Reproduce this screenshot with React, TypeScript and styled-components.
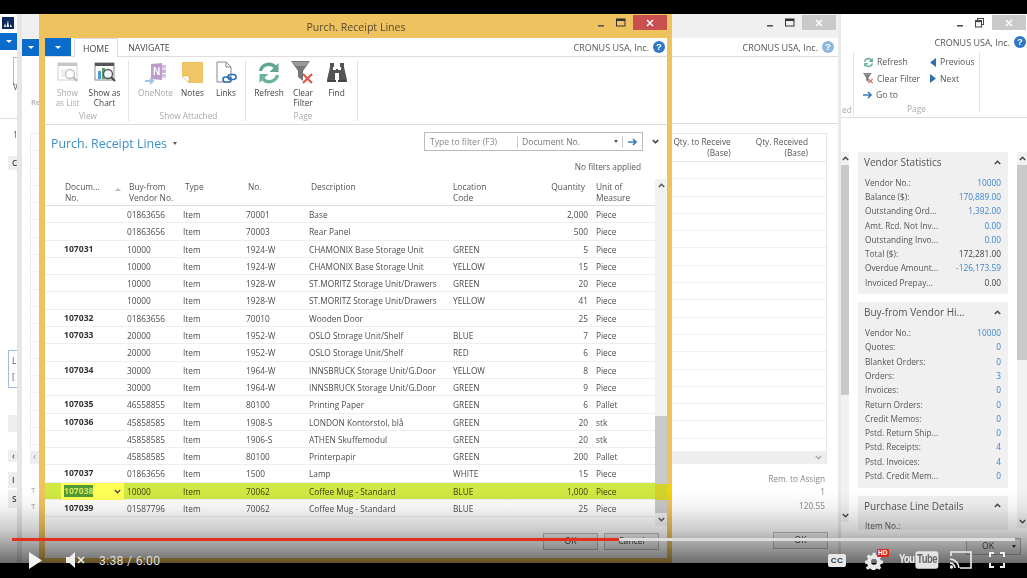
import React from "react";
import styled, { createGlobalStyle } from "styled-components";

const Global = createGlobalStyle`
  html, body { margin: 0; padding: 0; background: #000; }
  * { box-sizing: border-box; }
`;

const FONT = `"Open Sans", "Noto Sans", sans-serif`;

const Stage = styled.div`
  position: relative; width: 1027px; height: 578px; overflow: hidden; background: #000;
  font-family: ${FONT}; font-size: 8.3px; color: #444;
`;
const Desktop = styled.div`
  position: absolute; left: 0; top: 14px; width: 1027px; height: 549px; overflow: hidden; background: #fff;
  filter: blur(0.35px);
`;

/* ---------- window shells ---------- */
const FarWindow = styled.section`
  position: absolute; inset: 0; background: #fff; display: flex; justify-content: space-between;
`;
const MidWindow = styled.section`
  position: absolute; left: 17px; top: 0; width: 824px; height: 549px; background: #fff;
  border-left: 5px solid #e6e6e6; border-right: 3px solid #e9e9e9; display: flex; justify-content: space-between;
`;
const FrontWindow = styled.section`
  position: absolute; left: 39px; top: 0; width: 633px; height: 549px; background: #fff;
  border: solid #eec35f; border-width: 0 5px 5px 6px; display: flex; flex-direction: column;
`;

/* ---------- window controls ---------- */
const Controls = styled.div<{ $h: number; $pad: number }>`
  display: flex; justify-content: flex-end; align-items: flex-start; height: ${p => p.$h}px;
  padding-right: ${p => p.$pad}px;
`;
const Ctl = styled.span`
  width: 20px; height: 15px; margin-top: 1px; display: flex; align-items: center; justify-content: center;
`;
const CloseBtn = styled.span<{ $on?: boolean }>`
  width: 34px; height: 15px; margin-top: 1px; margin-left: 2px; display: flex; align-items: center; justify-content: center;
  background: ${p => (p.$on ? "#c9504f" : "#c9c9c9")}; color: #fff;
`;
const WinControls = ({ h, pad, on, restore, dark }: { h: number; pad: number; on?: boolean; restore?: boolean; dark?: string }) => (
  <Controls $h={h} $pad={pad}>
    <Ctl><svg width="9" height="9"><rect x="1" y="7" width="6" height="1.6" fill={dark || "#555"} /></svg></Ctl>
    <Ctl>
      {restore ? (
        <svg width="10" height="10"><rect x="2.5" y="0.5" width="6" height="6" fill="none" stroke="#444" /><rect x="0.5" y="2.5" width="6" height="6.5" fill="#f4f4f4" stroke="#444" /><rect x="0.5" y="2.5" width="6" height="1.6" fill="#444" /></svg>
      ) : (
        <svg width="10" height="9"><rect x="0.5" y="1" width="8.5" height="7" fill="none" stroke="#333" /><rect x="0.5" y="1" width="8.5" height="2" fill="#333" /></svg>
      )}
    </Ctl>
    <CloseBtn $on={on}><svg width="8" height="8"><path d="M1 1L7 7M7 1L1 7" stroke="#fff" strokeWidth="1.5" /></svg></CloseBtn>
  </Controls>
);

const Help = styled.span<{ $faded?: boolean }>`
  width: 12px; height: 12px; border-radius: 50%; background: ${p => (p.$faded ? "#8fb6df" : "#2e77c9")}; color: #fff;
  font: 700 9.5px/12px "Liberation Sans", sans-serif; text-align: center; flex: none;
`;
const Company = styled.div<{ $h: number; $pad: number }>`
  display: flex; align-items: center; justify-content: flex-end; gap: 4px; height: ${p => p.$h}px; padding-right: ${p => p.$pad}px;
  font-size: 9px; color: #555; white-space: nowrap;
`;

/* ---------- far window ---------- */
const FarLeft = styled.div`
  width: 17px; display: flex; flex-direction: column; overflow: hidden; color: #555; font-size: 8.3px;
`;
const Logo = styled.div`
  width: 12px; height: 12px; margin: 3px 0 0 2px; background: #0c2a5c; display: flex; flex: none;
`;
const BlueMenu = styled.div<{ $w: number; $h: number; $mt: number }>`
  width: ${p => p.$w}px; height: ${p => p.$h}px; margin-top: ${p => p.$mt}px; background: #0b6bcb; flex: none;
  display: flex; align-items: center; justify-content: center;
  &::after { content: ""; border: 3px solid transparent; border-top: 3px solid #fff; border-bottom: 0; }
`;
const StubBox = styled.div`
  height: 28px; width: 4px; margin: 7px 0 0 13px; border: 1px solid #bbb; border-right: 0; flex: none;
`;
const StubText = styled.div<{ $mt: number; $ml: number }>`
  margin-top: ${p => p.$mt}px; margin-left: ${p => p.$ml}px; height: 12px; line-height: 12px; flex: none; white-space: nowrap;
`;
const StubRule = styled.div`
  height: 1px; background: #ddd; margin-top: 25px; flex: none;
`;
const StubGrey = styled.div<{ $mt: number; $h: number }>`
  margin-top: ${p => p.$mt}px; height: ${p => p.$h}px; margin-left: 8px; background: #eee; padding-left: 4px; flex: none;
  line-height: ${p => p.$h}px; color: #444; font-weight: 600;
`;
const StubInput = styled.div`
  margin: 180px 0 0 8px; height: 38px; border: 1px solid #9dbde0; border-right: 0; padding: 2px 0 0 3px; line-height: 16px; flex: none;
`;

const FarRight = styled.div`
  width: 186px; display: flex; flex-direction: column;
`;
const FarRibbon = styled.div`
  height: 66px; border-bottom: 1px solid #ddd; display: flex; flex: none;
`;
const RibbonStub = styled.div`
  width: 13px; height: 64px; border-right: 1px solid #e4e4e4; color: #aaa; line-height: 10px; padding: 53px 0 0 1px; flex: none;
`;
const SmallCol = styled.div`
  display: flex; flex-direction: column; padding-top: 2px; gap: 0;
`;
const SmallBtn = styled.div`
  display: flex; align-items: center; gap: 3px; height: 16.6px; color: #555; font-size: 8.6px; white-space: nowrap;
  svg { flex: none; }
`;
const PageGroup = styled.div`
  display: flex; flex-direction: column; width: 126px; border-right: 1px solid #e4e4e4; height: 60px;
`;
const PageGroupRow = styled.div`
  display: flex; gap: 9px; padding-left: 9px; height: 53px;
`;
const GroupName = styled.div`
  color: #aaa; font-size: 8.3px; text-align: center; line-height: 10px;
`;
const SideArea = styled.div`
  display: flex; padding-top: 34px; height: 412px; flex: none;
`;
const SideBar = styled.div<{ $w: number; $h: number }>`
  width: ${p => p.$w}px; height: ${p => p.$h}px; background: #f1f1f1; display: flex; flex-direction: column; flex: none;
`;
const SideArrow = styled.div`
  height: 13px; display: flex; align-items: center; justify-content: center; flex: none;
`;
const SideThumb = styled.div<{ $h: number }>`
  height: ${p => p.$h}px; background: #c9c9c9; flex: none;
`;
const Spacer = styled.div`
  flex: 1;
`;
const Panels = styled.div`
  width: 150px; margin: 0 9px; height: 378px; overflow: hidden; display: flex; flex-direction: column; gap: 8px; flex: none;
`;
const Panel = styled.div`
  background: #f0f0f0; padding: 0 7px 5px; flex: none;
`;
const PanelHead = styled.div`
  height: 20px; display: flex; align-items: center; justify-content: space-between;
  font-size: 10px; color: #555; margin-left: -1px; margin-bottom: 3px;
`;
const PanelRow = styled.div`
  height: 14.3px; display: flex; align-items: center; justify-content: space-between; font-size: 8.3px; color: #555; white-space: nowrap;
`;
const PanelValue = styled.span<{ $plain?: boolean }>`
  color: ${p => (p.$plain ? "#444" : "#3f84d0")};
`;

const Chevron = ({ up = true, c = "#444" }: { up?: boolean; c?: string }) => (
  <svg width="7" height="5" viewBox="0 0 7 5">
    <path d={up ? "M0.8 4L3.5 1.2L6.2 4" : "M0.8 1L3.5 3.8L6.2 1"} fill="none" stroke={c} strokeWidth="1.4" />
  </svg>
);

/* ---------- mid window ---------- */
const MidLeft = styled.div`
  width: 17px; display: flex; flex-direction: column; overflow: hidden; color: #999; font-size: 8px;
`;
const TitleStrip = styled.div`
  height: 24px; background: #f0f0f0; flex: none;
`;
const MidTableStub = styled.div`
  margin: 25px 0 0 8px; height: 331px; border: 1px solid #eee; border-right: 0; flex: none; display: flex; flex-direction: column;
  justify-content: flex-end;
  background: repeating-linear-gradient(180deg, #fff 0 16.3px, #f0f0f0 16.3px 17.3px);
`;
const MidStubScroll = styled.div`
  height: 12px; background: #eee; color: #999; font-size: 10px; line-height: 11px; padding-left: 2px;
`;
const MidRight = styled.div`
  width: 166px; display: flex; flex-direction: column;
`;
const MidTitle = styled.div`
  height: 24px; background: #f0f0f0; flex: none;
`;
const MidRibbonRest = styled.div`
  height: 68px; border-bottom: 1px solid #ddd; border-top: 1px solid #ddd; flex: none;
`;
const MidTable = styled.div`
  width: 155px; margin-top: 9px; height: 331px; border: solid #e6e6e6; border-width: 1px 1px 0 0; display: flex; flex-direction: column; flex: none;
`;
const MidHead = styled.div`
  height: 28px; display: flex; justify-content: flex-end; gap: 25px; padding: 2px 18px 0 0; color: #555; font-size: 8.3px; line-height: 11.3px;
  text-align: right; border-bottom: 1px solid #e4e4e4; flex: none;
`;
const MidLine = styled.div`
  height: 17.3px; border-bottom: 1px solid #f0f0f0; flex: none;
`;
const MidLines = styled.div`
  flex: 1; overflow: hidden;
`;
const MidHScroll = styled.div`
  height: 13px; background: #eee; display: flex; align-items: center; justify-content: flex-end; padding-right: 4px; flex: none;
`;
const Totals = styled.div`
  width: 153px; padding-top: 9px; text-align: right; color: #888; font-size: 8.3px; flex: none;
`;
const TotalRow = styled.div<{ $mb: number }>`
  height: 12px; line-height: 12px; margin-bottom: ${p => p.$mb}px;
`;
const Btn = styled.div`
  width: 55px; height: 17px; border: 1px solid #bbb; background: #f2f2f2; color: #444; font-size: 8.6px; text-align: center; line-height: 15px; flex: none;
`;
const MidBtnRow = styled.div`
  display: flex; justify-content: flex-end; padding: 20px 10px 0 0;
`;
const FarBtn = styled(Btn)`
  position: absolute; left: 966px; top: 524px; display: flex; justify-content: space-between; padding: 0 4px 0 15px;
  &::after { content: ""; align-self: center; border: 2.5px solid transparent; border-top: 3px solid #333; border-bottom: 0; }
`;

/* ---------- front window ---------- */
const FrontTitle = styled.div`
  height: 24px; display: grid; grid-template-columns: 1fr auto 1fr; flex: none; background: #eec35f;
`;
const TitleText = styled.div`
  font-size: 10.6px; color: #5a4a30; line-height: 26px;
`;
const TabsRow = styled.div`
  height: 19px; display: flex; border-bottom: 1px solid #ddd; flex: none; position: relative;
`;
const Tab = styled.div<{ $on?: boolean }>`
  height: 18px; padding: 0 8px; margin-left: ${p => (p.$on ? 3 : 2)}px; line-height: 20px; font-size: 8.8px; color: #444;
  background: #fff; border: ${p => (p.$on ? "1px solid #ddd" : "0")}; border-bottom: 0; ${p => (p.$on ? "height:19px;" : "")}
`;
const TabSpacer = styled.div`
  flex: 1;
`;
const Ribbon = styled.div`
  height: 68px; display: flex; border-bottom: 1px solid #ddd; flex: none;
`;
const Group = styled.div<{ $w: number }>`
  width: ${p => p.$w}px; height: 60px; margin-top: 4px; border-right: 1px solid #e2e2e2; display: flex; flex-direction: column; flex: none; padding-left: 3px;
`;
const GroupButtons = styled.div<{ $pl?: number }>`
  display: flex; height: 50px; padding-left: ${p => p.$pl || 0}px;
`;
const RibBtn = styled.div<{ $w: number; $off?: boolean }>`
  width: ${p => p.$w}px; display: flex; flex-direction: column; align-items: center; text-align: center; line-height: 10px;
  font-size: 8.3px; color: ${p => (p.$off ? "#aaa" : "#444")}; flex: none;
  svg { height: 24px; margin-bottom: 3px; flex: none; }
`;
const PageHead = styled.div`
  height: 54px; display: flex; flex-direction: column; flex: none; position: relative;
`;
const HeadTop = styled.div`
  display: flex; align-items: flex-start; padding-top: 7px; height: 36px;
`;
const PageTitle = styled.div`
  font-size: 12.4px; color: #3d8ec9; margin: 3px 0 0 6px; white-space: nowrap; line-height: 18px;
`;
const TitleCaret = styled.span`
  display: inline-block; margin: 0 0 3px 6px; border: 2.5px solid transparent; border-top: 3px solid #555; border-bottom: 0;
`;
const HeadGap = styled.div`
  flex: 1;
`;
const FilterBox = styled.div`
  width: 219px; height: 19px; border: 1px solid #bbb; display: flex; align-items: center; color: #888; font-size: 8.6px; white-space: nowrap;
`;
const FilterA = styled.div`
  width: 93px; padding-left: 5px; border-right: 1px solid #ccc; height: 12px; line-height: 12px;
`;
const FilterB = styled.div`
  flex: 1; padding-left: 4px; color: #777; height: 12px; line-height: 12px; display: flex; justify-content: space-between; padding-right: 4px; align-items: center;
  &::after { content: ""; border: 2.5px solid transparent; border-top: 3px solid #555; border-bottom: 0; }
`;
const FilterGo = styled.div`
  width: 20px; border-left: 1px solid #ccc; height: 12px; display: flex; align-items: center; justify-content: center; flex: none;
`;
const HeadChevron = styled.div`
  width: 24px; height: 19px; display: flex; align-items: center; justify-content: center; flex: none; margin-right: 0;
`;
const NoFilters = styled.div`
  text-align: right; padding-right: 26px; font-size: 8.3px; color: #555; line-height: 11px;
`;

const COLS = "19px 63px 56px 63px 63px 144px 135px 1fr";
const TableArea = styled.div`
  height: 347px; display: flex; flex: none;
`;
const Grid = styled.div`
  width: 610px; flex: none; display: flex; flex-direction: column;
`;
const HeadRow = styled.div`
  display: grid; grid-template-columns: ${COLS}; grid-template-rows: 1fr; height: 27px; border-bottom: 1px solid #ddd; padding-top: 2px;
  line-height: 11.3px; color: #555; font-size: 8.4px; flex: none;
`;
const HeadCell = styled.div<{ $col: number; $right?: boolean; $shift?: number }>`
  grid-column: ${p => p.$col}; grid-row: 1; text-align: ${p => (p.$right ? "right" : "left")}; padding-left: ${p => p.$shift || 0}px;
  padding-right: ${p => (p.$right ? 3 : 0)}px; white-space: pre-line; display: flex; justify-content: ${p => (p.$right ? "flex-end" : "space-between")};
`;
const SortMark = styled.span`
  align-self: center; margin: 0 6px 8px 0; border: 3px solid transparent; border-bottom: 3px solid #bbb; border-top: 0;
`;
const Row = styled.div<{ $sel?: boolean }>`
  display: grid; grid-template-columns: ${COLS}; grid-template-rows: 1fr; height: 17.3px; line-height: 17px; flex: none; white-space: nowrap;
  border-bottom: 1px solid #eeeeee; color: #4c4c4c; font-size: 8.3px;
  background: ${p => (p.$sel ? "#cfe843" : "#fff")};
  ${p => (p.$sel ? "color:#3d3d10;" : "")}
`;
const Cell = styled.div<{ $col: number; $right?: boolean }>`
  grid-column: ${p => p.$col}; grid-row: 1; text-align: ${p => (p.$right ? "right" : "left")};
`;
const UnitCell = styled(Cell)`
  padding-left: 8px;
`;
const DocCell = styled.div`
  grid-column: 2; grid-row: 1; font-weight: 700; color: #333; font-size: 8.6px;
`;
const ActiveCell = styled.div`
  grid-column: 2; grid-row: 1; margin-left: -3px; width: 63px; background: #ffff55; display: flex; align-items: center; justify-content: space-between; padding: 0 3px;
`;
const ActiveText = styled.span`
  background: #4f9b35; color: #d6e85a; font-weight: 700; font-size: 8.6px; line-height: 12px; height: 12px;
`;
const VScroll = styled.div`
  width: 12px; display: flex; flex-direction: column; background: #f1f1f1; flex: none; position: relative;
`;
const VArrow = styled.div`
  height: 13px; display: flex; align-items: center; justify-content: center; flex: none;
`;
const VThumb = styled.div`
  margin-top: 224px; height: 97px; background: #c9c9c9; flex: none;
`;
/* the selected row's highlight shows through the scrollbar and the window frame */
const RowBleed = styled.div`
  position: absolute; left: 0; top: 305px; width: 17px; height: 16px;
  background: linear-gradient(90deg, #d4d32e 0 12px, #f3d010 12px);
`;
const FrontFooter = styled.div`
  display: flex; justify-content: flex-end; gap: 6px; padding: 7px 8px 0 0;
`;

const CtrlOverlay = styled.div`
  position: absolute; left: 0; right: 0; top: 440px; height: 123px; pointer-events: none;
  background: linear-gradient(180deg, rgba(0,0,0,0) 0%, rgba(0,0,0,0) 42%, rgba(0,0,0,.05) 55%, rgba(0,0,0,.2) 73%, rgba(0,0,0,.42) 89%, rgba(0,0,0,.58) 100%);
`;
const Progress = styled.div`
  position: absolute; left: 12px; top: 538px; width: 1003px; height: 3px; background: #ddd; display: flex;
`;
const ProgressPlayed = styled.div`
  height: 3px; background: #e1301f;
`;
const BarRow = styled.div`
  position: absolute; left: 0; right: 0; top: 549px; height: 22px; display: flex; align-items: center; padding: 0 22px 0 29px; color: #ddd;
`;
const TimeText = styled.div`
  font: 400 12.2px/1 Roboto, sans-serif; letter-spacing: .3px; color: #ddd; margin-left: 14px; padding-top: 2px;
`;
const BarGap = styled.div`
  flex: 1;
`;
const MuteWrap = styled.div`
  margin-left: 24px; display: flex; align-items: center;
`;
const CC = styled.div`
  width: 18px; height: 13px; background: #e8e8e8; border-radius: 2px; color: #333; font: 700 8px/13px "Liberation Sans", sans-serif; text-align: center; letter-spacing: .4px;
`;
const GearWrap = styled.div`
  position: relative; width: 22px; height: 18px; margin-left: 19px;
`;
const HD = styled.span`
  position: absolute; right: -2px; top: -2px; background: #d9261c; color: #fff; font: 700 6.5px/8px "Liberation Sans", sans-serif; padding: 0 1.5px; border-radius: 1px;
`;
const YT = styled.div`
  display: flex; align-items: center; margin-left: 12px; font: 700 11.5px/1 "Liberation Sans", sans-serif; color: #eee; letter-spacing: -.6px;
  transform: scaleX(.82) scaleY(1.1); transform-origin: left center; width: 37px; white-space: nowrap;
`;
const YTBox = styled.span`
  background: #e4e4e4; color: #666; border-radius: 3px; padding: 2px 2px; margin-left: 1px;
`;
const Cast = styled.div`
  margin-left: 14px; display: flex;
`;
const Full = styled.div`
  margin-left: 17px; display: flex;
`;

/* ---------- ribbon art ---------- */
const ListIcon = () => (
  <svg width="24" height="24" viewBox="0 0 24 24" opacity=".55">
    <rect x="2" y="2" width="19" height="17" fill="#fff" stroke="#aaa" />
    <rect x="2" y="2" width="19" height="3" fill="#999" />
    <path d="M5 8h4v8H5zM10 8" fill="#e3e3e3" />
    <circle cx="14" cy="13" r="4.5" fill="#fff" stroke="#8a8a8a" strokeWidth="1.3" />
    <path d="M17 16l4 4" stroke="#777" strokeWidth="1.8" />
  </svg>
);
const ChartIcon = () => (
  <svg width="24" height="24" viewBox="0 0 24 24">
    <rect x="2" y="2" width="19" height="17" fill="#fff" stroke="#888" />
    <rect x="2" y="2" width="19" height="3" fill="#555" />
    <rect x="5" y="10" width="3" height="8" fill="#4c9ac9" />
    <rect x="9" y="7" width="3" height="11" fill="#5aa469" />
    <circle cx="15" cy="13" r="4.5" fill="#eef4f8" stroke="#555" strokeWidth="1.3" />
    <path d="M18 16l4 4" stroke="#444" strokeWidth="1.9" />
  </svg>
);
const OneNoteIcon = () => (
  <svg width="24" height="24" viewBox="0 0 24 24" opacity=".72">
    <path d="M7 3l11-1v17l-11-1z" fill="#a278b8" />
    <rect x="18" y="4" width="4" height="3.5" fill="#c4a7d3" /><rect x="18" y="8.500" width="4" height="3.5" fill="#b896cc" /><rect x="18" y="13" width="4" height="3.5" fill="#c4a7d3" />
    <text x="9" y="14" fontSize="10" fontWeight="700" fill="#fff" fontFamily="Liberation Sans">N</text>
    <path d="M1 20h8M6 17l3 3-3 3" fill="none" stroke="#7fb1de" strokeWidth="2" />
  </svg>
);
const NotesIcon = () => (
  <svg width="24" height="24" viewBox="0 0 24 24">
    <path d="M1 1h21v21H8L1 15z" fill="#efc566" />
    <path d="M1 15h7v7z" fill="#fff" stroke="#d4a94a" strokeWidth=".6" />
  </svg>
);
const LinksIcon = () => (
  <svg width="24" height="24" viewBox="0 0 24 24">
    <path d="M3 1h9l5 5v15H3z" fill="#fff" stroke="#888" />
    <path d="M12 1v5h5" fill="none" stroke="#888" />
    <rect x="9" y="16" width="8" height="5" rx="2.5" fill="#fff" stroke="#2c70b8" strokeWidth="1.6" />
    <rect x="14" y="13.5" width="8" height="5" rx="2.5" fill="none" stroke="#2c70b8" strokeWidth="1.6" />
  </svg>
);
const RefreshIcon = ({ s = 24 }: { s?: number }) => (
  <svg width={s} height={s} viewBox="0 0 24 24">
    <path d="M3.5 10A8.5 8.5 0 0 1 18 6" fill="none" stroke="#5da98b" strokeWidth="3.4" />
    <path d="M21.5 2v9h-9z" fill="#5da98b" />
    <path d="M20.5 14A8.5 8.5 0 0 1 6 18" fill="none" stroke="#6cb39b" strokeWidth="3.4" />
    <path d="M2.5 22v-9h9z" fill="#6cb39b" />
  </svg>
);
const FilterIcon = ({ s = 24 }: { s?: number }) => (
  <svg width={s} height={s} viewBox="0 0 24 24">
    <path d="M0 0h19l-7 10v10l-5-4v-6z" fill="#777" />
    <path d="M1 1h17l-4 4H5z" fill="#9a9a9a" />
    <path d="M12 13l9 9M21 13l-9 9" stroke="#e05a4a" strokeWidth="2.2" />
  </svg>
);
const FindIcon = () => (
  <svg width="24" height="24" viewBox="0 0 24 24">
    <path d="M5 2h4v4h-1v3h3v-1h2v1h3V6h-1V2h4v4l3 13v2h-8V12h-4v9H2v-2L5 6z" fill="#555" />
    <path d="M3 19h8v2H3zM13 19h8v2h-8z" fill="#444" />
  </svg>
);
const ArrowRight = ({ c = "#3b7cb9" }: { c?: string }) => (
  <svg width="10" height="8" viewBox="0 0 10 8"><path d="M0 4h8M5 1l3 3-3 3" fill="none" stroke={c} strokeWidth="1.7" /></svg>
);
const Tri = ({ left }: { left?: boolean }) => (
  <svg width="8" height="9" viewBox="0 0 8 9"><path d={left ? "M7 0v9L1 4.5z" : "M1 0v9l6-4.5z"} fill="#2f6fb0" /></svg>
);

/* ---------- data ---------- */
type Line = { doc?: string; buy: string; no: string; desc: string; loc?: string; qty: string; unit: string; sel?: boolean };
const LINES: Line[] = [
  { buy: "01863656", no: "70001", desc: "Base", qty: "2,000", unit: "Piece" },
  { buy: "01863656", no: "70003", desc: "Rear Panel", qty: "500", unit: "Piece" },
  { doc: "107031", buy: "10000", no: "1924-W", desc: "CHAMONIX Base Storage Unit", loc: "GREEN", qty: "5", unit: "Piece" },
  { buy: "10000", no: "1924-W", desc: "CHAMONIX Base Storage Unit", loc: "YELLOW", qty: "15", unit: "Piece" },
  { buy: "10000", no: "1928-W", desc: "ST.MORITZ Storage Unit/Drawers", loc: "GREEN", qty: "20", unit: "Piece" },
  { buy: "10000", no: "1928-W", desc: "ST.MORITZ Storage Unit/Drawers", loc: "YELLOW", qty: "41", unit: "Piece" },
  { doc: "107032", buy: "01863656", no: "70010", desc: "Wooden Door", qty: "25", unit: "Piece" },
  { doc: "107033", buy: "20000", no: "1952-W", desc: "OSLO Storage Unit/Shelf", loc: "BLUE", qty: "7", unit: "Piece" },
  { buy: "20000", no: "1952-W", desc: "OSLO Storage Unit/Shelf", loc: "RED", qty: "6", unit: "Piece" },
  { doc: "107034", buy: "30000", no: "1964-W", desc: "INNSBRUCK Storage Unit/G.Door", loc: "YELLOW", qty: "8", unit: "Piece" },
  { buy: "30000", no: "1964-W", desc: "INNSBRUCK Storage Unit/G.Door", loc: "GREEN", qty: "9", unit: "Piece" },
  { doc: "107035", buy: "46558855", no: "80100", desc: "Printing Paper", loc: "GREEN", qty: "6", unit: "Pallet" },
  { doc: "107036", buy: "45858585", no: "1908-S", desc: "LONDON Kontorstol, blå", loc: "GREEN", qty: "20", unit: "stk" },
  { buy: "45858585", no: "1906-S", desc: "ATHEN Skuffemodul", loc: "GREEN", qty: "20", unit: "stk" },
  { buy: "45858585", no: "80100", desc: "Printerpapir", loc: "GREEN", qty: "200", unit: "Pallet" },
  { doc: "107037", buy: "01863656", no: "1500", desc: "Lamp", loc: "WHITE", qty: "15", unit: "Piece" },
  { doc: "107038", buy: "10000", no: "70062", desc: "Coffee Mug - Standard", loc: "BLUE", qty: "1,000", unit: "Piece", sel: true },
  { doc: "107039", buy: "01587796", no: "70062", desc: "Coffee Mug - Standard", loc: "BLUE", qty: "25", unit: "Piece" },
];
const STATS: [string, string, boolean?][] = [
  ["Vendor No.:", "10000"], ["Balance ($):", "170,889.00"], ["Outstanding Ord...", "1,392.00"], ["Amt. Rcd. Not Inv...", "0.00"],
  ["Outstanding Invo...", "0.00"], ["Total ($):", "172,281.00", true], ["Overdue Amount...", "-126,173.59"], ["Invoiced Prepay...", "0.00", true],
];
const HISTORY: [string, string][] = [
  ["Vendor No.:", "10000"], ["Quotes:", "0"], ["Blanket Orders:", "0"], ["Orders:", "3"], ["Invoices:", "0"], ["Return Orders:", "0"],
  ["Credit Memos:", "0"], ["Pstd. Return Ship...", "0"], ["Pstd. Receipts:", "4"], ["Pstd. Invoices:", "4"], ["Pstd. Credit Mem...", "0"],
];
const MID_LINES = Array.from({ length: 17 }, (_, i) => i);

const Side = ({ w, h, thumb }: { w: number; h: number; thumb: number }) => (
  <SideBar $w={w} $h={h}>
    <SideArrow><Chevron /></SideArrow>
    <SideThumb $h={thumb} />
    <Spacer />
    <SideArrow><Chevron up={false} /></SideArrow>
  </SideBar>
);

export default function App() {
  return (
    <Stage>
      <Global />
      <Desktop>
        <FarWindow>
          <FarLeft>
            <Logo>
              <svg width="12" height="12" viewBox="0 0 12 12"><path d="M2 10l1-4 1 4zM4.500 10l1.500-7 1 7zM8 10l.5-3 1.500 3z" fill="#fff" /></svg>
            </Logo>
            <BlueMenu $w={17} $h={17} $mt={4} />
            <StubBox />
            <StubText $mt={-4} $ml={13}>V</StubText>
            <StubRule />
            <StubText $mt={10} $ml={13}>1</StubText>
            <StubGrey $mt={15} $h={14}>C</StubGrey>
            <StubInput>L<br />[</StubInput>
            <StubGrey $mt={27} $h={17}> </StubGrey>
            <StubGrey $mt={18} $h={12}>‹</StubGrey>
            <StubGrey $mt={10} $h={16}>I</StubGrey>
            <StubGrey $mt={2} $h={18}>S</StubGrey>
          </FarLeft>
          <FarRight>
            <WinControls h={18} pad={1} restore />
            <Company $h={20} $pad={1}>CRONUS USA, Inc. <Help>?</Help></Company>
            <FarRibbon>
              <RibbonStub>ed</RibbonStub>
              <PageGroup>
                <PageGroupRow>
                  <SmallCol>
                    <SmallBtn><RefreshIcon s={11} />Refresh</SmallBtn>
                    <SmallBtn><FilterIcon s={11} />Clear Filter</SmallBtn>
                    <SmallBtn><ArrowRight />Go to</SmallBtn>
                  </SmallCol>
                  <SmallCol>
                    <SmallBtn><Tri left />Previous</SmallBtn>
                    <SmallBtn><Tri />Next</SmallBtn>
                  </SmallCol>
                </PageGroupRow>
                <GroupName>Page</GroupName>
              </PageGroup>
            </FarRibbon>
            <SideArea>
              <Side w={8} h={370} thumb={230} />
              <Panels>
                <Panel>
                  <PanelHead>Vendor Statistics<Chevron /></PanelHead>
                  {STATS.map(([l, v, plain]) => (
                    <PanelRow key={l}>{l}<PanelValue $plain={plain}>{v}</PanelValue></PanelRow>
                  ))}
                </Panel>
                <Panel>
                  <PanelHead>Buy-from Vendor Hi...<Chevron /></PanelHead>
                  {HISTORY.map(([l, v]) => (
                    <PanelRow key={l}>{l}<PanelValue>{v}</PanelValue></PanelRow>
                  ))}
                </Panel>
                <Panel>
                  <PanelHead>Purchase Line Details<Chevron /></PanelHead>
                  <PanelRow>Item No.:</PanelRow>
                  <PanelRow> </PanelRow>
                  <PanelRow> </PanelRow>
                </Panel>
              </Panels>
              <Side w={10} h={376} thumb={195} />
            </SideArea>
          </FarRight>
          <FarBtn>OK</FarBtn>
        </FarWindow>

        <MidWindow>
          <MidLeft>
            <TitleStrip />
            <BlueMenu $w={17} $h={17} $mt={1} />
            <StubText $mt={40} $ml={9}>Re</StubText>
            <MidTableStub><MidStubScroll>‹</MidStubScroll></MidTableStub>
            <StubText $mt={20} $ml={9}>T</StubText>
            <StubText $mt={4} $ml={9}>T</StubText>
          </MidLeft>
          <MidRight>
            <MidTitle><WinControls h={24} pad={2} /></MidTitle>
            <Company $h={18} $pad={4}>CRONUS USA, Inc. <Help $faded>?</Help></Company>
            <MidRibbonRest />
            <MidTable>
              <MidHead>
                <div>Qty. to Receive<br />(Base)</div>
                <div>Qty. Received<br />(Base)</div>
              </MidHead>
              <MidLines>{MID_LINES.map(i => <MidLine key={i} />)}</MidLines>
              <MidHScroll><Chevron c="#aaa" up={false} /></MidHScroll>
            </MidTable>
            <Totals>
              <TotalRow $mb={1}>Rem. to Assign</TotalRow>
              <TotalRow $mb={2}>1</TotalRow>
              <TotalRow $mb={0}>120.55</TotalRow>
            </Totals>
            <MidBtnRow><Btn>OK</Btn></MidBtnRow>
          </MidRight>
        </MidWindow>

        <FrontWindow>
          <FrontTitle>
            <div />
            <TitleText>Purch. Receipt Lines</TitleText>
            <WinControls h={24} pad={0} on dark="#555" />
          </FrontTitle>
          <TabsRow>
            <BlueMenu $w={26} $h={18} $mt={0} />
            <Tab $on>HOME</Tab>
            <Tab>NAVIGATE</Tab>
            <TabSpacer />
            <Company $h={18} $pad={2}>CRONUS USA, Inc. <Help>?</Help></Company>
          </TabsRow>
          <Ribbon>
            <Group $w={84}>
              <GroupButtons $pl={1}>
                <RibBtn $w={37} $off><ListIcon />Show<br />as List</RibBtn>
                <RibBtn $w={37}><ChartIcon />Show as<br />Chart</RibBtn>
              </GroupButtons>
              <GroupName>View</GroupName>
            </Group>
            <Group $w={117}>
              <GroupButtons $pl={5}>
                <RibBtn $w={37} $off><OneNoteIcon />OneNote</RibBtn>
                <RibBtn $w={37}><NotesIcon />Notes</RibBtn>
                <RibBtn $w={30}><LinksIcon />Links</RibBtn>
              </GroupButtons>
              <GroupName>Show Attached</GroupName>
            </Group>
            <Group $w={112}>
              <GroupButtons $pl={1}>
                <RibBtn $w={38}><RefreshIcon />Refresh</RibBtn>
                <RibBtn $w={30}><FilterIcon />Clear<br />Filter</RibBtn>
                <RibBtn $w={37}><FindIcon />Find</RibBtn>
              </GroupButtons>
              <GroupName>Page</GroupName>
            </Group>
          </Ribbon>
          <PageHead>
            <HeadTop>
              <PageTitle>Purch. Receipt Lines<TitleCaret /></PageTitle>
              <HeadGap />
              <FilterBox>
                <FilterA>Type to filter (F3)</FilterA>
                <FilterB>Document No.</FilterB>
                <FilterGo><ArrowRight /></FilterGo>
              </FilterBox>
              <HeadChevron><Chevron up={false} c="#333" /></HeadChevron>
            </HeadTop>
            <NoFilters>No filters applied</NoFilters>
          </PageHead>
          <TableArea>
            <Grid>
              <HeadRow>
                <HeadCell $col={2} $shift={1}><span>Docum...<br />No.</span><SortMark /></HeadCell>
                <HeadCell $col={3} $shift={2}>{"Buy-from\nVendor No."}</HeadCell>
                <HeadCell $col={4} $shift={2}>Type</HeadCell>
                <HeadCell $col={5} $shift={2}>No.</HeadCell>
                <HeadCell $col={6} $shift={2}>Description</HeadCell>
                <HeadCell $col={7}>{"Location\nCode"}</HeadCell>
                <HeadCell $col={7} $right>Quantity</HeadCell>
                <HeadCell $col={8} $shift={8}>{"Unit of\nMeasure"}</HeadCell>
              </HeadRow>
              {LINES.map((r, i) => (
                <Row key={i} $sel={r.sel}>
                  {r.sel ? (
                    <ActiveCell><ActiveText>{r.doc}</ActiveText><Chevron up={false} c="#444" /></ActiveCell>
                  ) : (
                    <DocCell>{r.doc}</DocCell>
                  )}
                  <Cell $col={3}>{r.buy}</Cell>
                  <Cell $col={4}>Item</Cell>
                  <Cell $col={5}>{r.no}</Cell>
                  <Cell $col={6}>{r.desc}</Cell>
                  <Cell $col={7}>{r.loc}</Cell>
                  <Cell $col={7} $right>{r.qty}</Cell>
                  <UnitCell $col={8}>{r.unit}</UnitCell>
                </Row>
              ))}
            </Grid>
            <VScroll>
              <VArrow><Chevron c="#555" /></VArrow>
              <VThumb />
              <Spacer />
              <VArrow><Chevron up={false} c="#555" /></VArrow>
              <RowBleed />
            </VScroll>
          </TableArea>
          <FrontFooter>
            <Btn>OK</Btn>
            <Btn>Cancel</Btn>
          </FrontFooter>
        </FrontWindow>
      </Desktop>

      <CtrlOverlay />
      <Progress><ProgressPlayed style={{ width: 607 }} /></Progress>
      <BarRow>
        <svg width="13" height="17" viewBox="0 0 13 17"><path d="M0 0l13 8.5L0 17z" fill="#f2f2f2" /></svg>
        <MuteWrap>
          <svg width="19" height="16" viewBox="0 0 19 16">
            <path d="M0 5h3.5L9 0v16l-5.5-5H0z" fill="#eee" />
            <path d="M12 5l6 6M18 5l-6 6" stroke="#eee" strokeWidth="1.7" />
          </svg>
        </MuteWrap>
        <TimeText>3:38 / 6:00</TimeText>
        <BarGap />
        <CC>CC</CC>
        <GearWrap>
          <svg width="18" height="18" viewBox="0 0 24 24" style={{ marginTop: 1 }}>
            <path fill="#e8e8e8" fillRule="evenodd" d="M10 1h4l.6 3 2.400 1 2.600-1.700 2.800 2.800L20 8.700l1 2.400 3 .6v3.600l-3 .6-1 2.400 1.700 2.600-2.800 2.800-2.600-1.700-2.400 1-.6 2h-4l-.6-2-2.400-1-2.600 1.700-2.800-2.800L4 18.300l-1-2.400-3-.6v-3.600l3-.6 1-2.400-1.700-2.600 2.800-2.800L7.700 5l2.400-1zM12 9a4 4 0 1 0 0 8 4 4 0 0 0 0-8z" />
          </svg>
          <HD>HD</HD>
        </GearWrap>
        <YT>You<YTBox>Tube</YTBox></YT>
        <Cast>
          <svg width="22" height="18" viewBox="0 0 22 18">
            <path d="M1 5V1h20v16H10" fill="none" stroke="#eee" strokeWidth="1.6" />
            <path d="M0 8a9.500 9.500 0 0 1 9 9M0 12a5.500 5.500 0 0 1 5 5" fill="none" stroke="#eee" strokeWidth="1.7" />
            <circle cx="1.500" cy="16" r="1.700" fill="#eee" />
          </svg>
        </Cast>
        <Full>
          <svg width="16" height="16" viewBox="0 0 16 16">
            <path d="M1 5V1h4M11 1h4v4M15 11v4h-4M5 15H1v-4" fill="none" stroke="#f0f0f0" strokeWidth="2" />
          </svg>
        </Full>
      </BarRow>
    </Stage>
  );
}
